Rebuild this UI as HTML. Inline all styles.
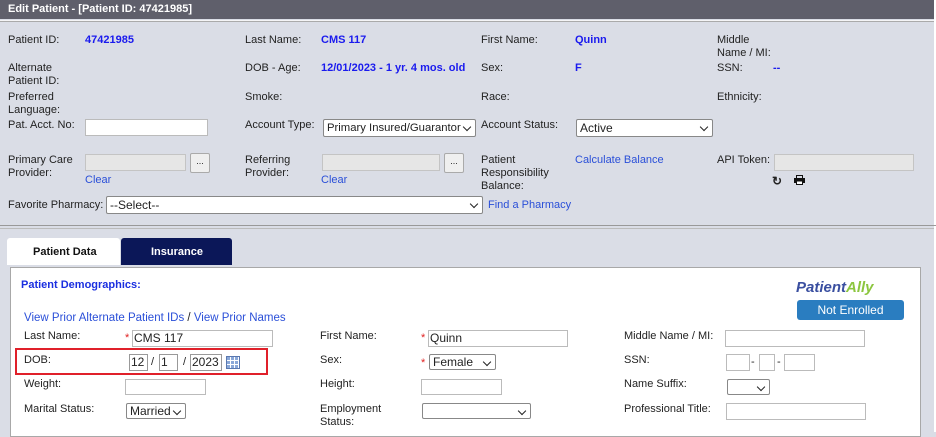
<!DOCTYPE html>
<html><head><meta charset="utf-8"><style>
*{margin:0;padding:0;box-sizing:border-box}
body{width:936px;height:432px;overflow:hidden;background:#dadde6;font-family:"Liberation Sans",Arial,sans-serif;font-size:11px;color:#222;position:relative}
.a{position:absolute;white-space:nowrap;line-height:13px;margin-top:1px}
.v{color:#1a1aee;font-weight:bold}
.l{color:#2a4fd8}
.in{position:absolute;background:#fff;border:1px solid #bbb}
.dis{position:absolute;background:#e6e6e6;border:1px solid #c4c4c4}
.sel{position:absolute;background:#fff;border:1px solid #888;border-radius:2px;font-size:12px;line-height:16px;padding-left:3px;white-space:nowrap;overflow:hidden}
.sel:after{content:"";position:absolute;right:5px;top:4px;width:5px;height:5px;border-right:1.5px solid #222;border-bottom:1.5px solid #222;transform:rotate(45deg)}
.btn{position:absolute;background:#efefef;border:1px solid #aaa;border-radius:2px;text-align:center;font-size:9px;line-height:14px}
.r{color:#e02020}
</style></head><body>
<div style="position:absolute;left:0;top:0;width:936px;height:19px;background:#5f5f6b"></div>
<div class="a" style="left:8px;top:2px;color:#fff;font-weight:bold">Edit Patient - [Patient ID: 47421985]</div>
<div style="position:absolute;left:0;top:20px;width:936px;height:2px;background:#f4f4f6;border-bottom:1px solid #aaa"></div>
<div style="position:absolute;right:0;top:0;width:2px;height:432px;background:#fff"></div>

<div class="a" style="left:8px;top:33px">Patient ID:</div><div class="a v" style="left:85px;top:33px">47421985</div>
<div class="a" style="left:245px;top:33px">Last Name:</div><div class="a v" style="left:321px;top:33px">CMS 117</div>
<div class="a" style="left:481px;top:33px">First Name:</div><div class="a v" style="left:575px;top:33px">Quinn</div>
<div class="a" style="left:717px;top:33px">Middle<br>Name / MI:</div>

<div class="a" style="left:8px;top:61px">Alternate<br>Patient ID:</div>
<div class="a" style="left:245px;top:61px">DOB - Age:</div><div class="a v" style="left:321px;top:61px">12/01/2023 - 1 yr. 4 mos. old</div>
<div class="a" style="left:481px;top:61px">Sex:</div><div class="a v" style="left:575px;top:61px">F</div>
<div class="a" style="left:717px;top:61px">SSN:</div><div class="a v" style="left:773px;top:61px">--</div>

<div class="a" style="left:8px;top:90px">Preferred<br>Language:</div>
<div class="a" style="left:245px;top:90px">Smoke:</div>
<div class="a" style="left:481px;top:90px">Race:</div>
<div class="a" style="left:717px;top:90px">Ethnicity:</div>

<div class="a" style="left:8px;top:118px">Pat. Acct. No:</div>
<div class="in" style="left:85px;top:119px;width:123px;height:17px"></div>
<div class="a" style="left:245px;top:118px">Account Type:</div>
<div class="sel" style="left:323px;top:119px;width:153px;height:18px;font-size:11.3px">Primary Insured/Guarantor</div>
<div class="a" style="left:481px;top:118px">Account Status:</div>
<div class="sel" style="left:576px;top:119px;width:137px;height:18px">Active</div>

<div class="a" style="left:8px;top:153px">Primary Care<br>Provider:</div>
<div class="dis" style="left:85px;top:154px;width:101px;height:17px"></div>
<div class="btn" style="left:190px;top:153px;width:20px;height:20px">...</div>
<div class="a l" style="left:85px;top:173px">Clear</div>
<div class="a" style="left:245px;top:153px">Referring<br>Provider:</div>
<div class="dis" style="left:322px;top:154px;width:118px;height:17px"></div>
<div class="btn" style="left:444px;top:153px;width:20px;height:20px">...</div>
<div class="a l" style="left:321px;top:173px">Clear</div>
<div class="a" style="left:481px;top:153px">Patient<br>Responsibility<br>Balance:</div>
<div class="a l" style="left:575px;top:153px">Calculate Balance</div>
<div class="a" style="left:717px;top:153px">API Token:</div>
<div class="dis" style="left:774px;top:154px;width:140px;height:17px"></div>
<div class="a" style="left:772px;top:174px;font-weight:bold;font-size:12px">&#8635;</div>
<svg style="position:absolute;left:794px;top:175px" width="11" height="10" viewBox="0 0 11 10"><rect x="2.5" y="0.5" width="6" height="3" fill="none" stroke="#111"/><rect x="0" y="3" width="11" height="5" fill="#111"/><rect x="2.5" y="6" width="6" height="3.5" fill="#fff" stroke="#111"/></svg>

<div class="a" style="left:8px;top:198px">Favorite Pharmacy:</div>
<div class="sel" style="left:106px;top:196px;width:377px;height:18px">--Select--</div>
<div class="a l" style="left:488px;top:198px">Find a Pharmacy</div>

<div style="position:absolute;left:0;top:225px;width:936px;height:1px;background:#999"></div>
<div style="position:absolute;left:0;top:228px;width:934px;height:1px;background:#bbb"></div>

<div style="position:absolute;left:7px;top:238px;width:113px;height:27px;background:#fff;border-radius:3px 3px 0 0"></div>
<div class="a" style="left:33px;top:245px;font-weight:bold;color:#111">Patient Data</div>
<div style="position:absolute;left:121px;top:238px;width:111px;height:27px;background:#0b1758;border-radius:3px 3px 0 0"></div>
<div class="a" style="left:151px;top:245px;font-weight:bold;color:#fff">Insurance</div>

<div style="position:absolute;left:10px;top:267px;width:911px;height:170px;background:#fff;border:1px solid #a8a8a8"></div>
<div class="a" style="left:21px;top:278px;font-weight:bold;color:#1a2fe0">Patient Demographics:</div>
<div class="a" style="left:796px;top:278px;font-weight:bold;font-style:italic;font-size:15px;line-height:18px;color:#3a4fa0">Patient<span style="color:#8cc63f">Ally</span></div>
<div style="position:absolute;left:797px;top:300px;width:107px;height:20px;background:#2a7dc0;border-radius:3px;color:#fff;font-size:12px;line-height:20px;text-align:center">Not Enrolled</div>

<div class="a l" style="left:24px;top:311px;font-size:11.5px">View Prior Alternate Patient IDs <span style="color:#222">/</span> View Prior Names</div>

<div class="a" style="left:24px;top:329px">Last Name:</div><div class="a r" style="left:125px;top:331px">*</div>
<div class="in" style="left:132px;top:330px;width:141px;height:17px;font-size:12px;line-height:15px;padding-left:1px">CMS 117</div>
<div class="a" style="left:320px;top:329px">First Name:</div><div class="a r" style="left:421px;top:331px">*</div>
<div class="in" style="left:428px;top:330px;width:140px;height:17px;font-size:12px;line-height:15px;padding-left:1px">Quinn</div>
<div class="a" style="left:624px;top:329px">Middle Name / MI:</div>
<div class="in" style="left:725px;top:330px;width:140px;height:17px"></div>

<div style="position:absolute;left:15px;top:348px;width:253px;height:27px;border:2px solid #e0202a"></div>
<div class="a" style="left:24px;top:353px">DOB:</div>
<div class="in" style="left:129px;top:354px;width:19px;height:17px;font-size:12px;line-height:15px;padding-left:1px;border-color:#999">12</div>
<div class="a" style="left:151px;top:355px">/</div>
<div class="in" style="left:159px;top:354px;width:19px;height:17px;font-size:12px;line-height:15px;padding-left:1px;border-color:#999">1</div>
<div class="a" style="left:183px;top:355px">/</div>
<div class="in" style="left:190px;top:354px;width:32px;height:17px;font-size:12px;line-height:15px;padding-left:1px;border-color:#999">2023</div>
<div style="position:absolute;left:226px;top:356px;width:14px;height:13px;background:#8aa8d8;border:1px solid #5a78b0;background-image:repeating-linear-gradient(90deg,transparent 0 3px,#fff 3px 4px),repeating-linear-gradient(0deg,transparent 0 3px,#fff 3px 4px)"></div>
<div class="a" style="left:320px;top:353px">Sex:</div><div class="a r" style="left:421px;top:356px">*</div>
<div class="sel" style="left:429px;top:354px;width:67px;height:16px;line-height:14px">Female</div>
<div class="a" style="left:624px;top:353px">SSN:</div>
<div class="in" style="left:726px;top:354px;width:24px;height:17px"></div>
<div class="a" style="left:751px;top:355px">-</div>
<div class="in" style="left:759px;top:354px;width:16px;height:17px"></div>
<div class="a" style="left:777px;top:355px">-</div>
<div class="in" style="left:784px;top:354px;width:31px;height:17px"></div>

<div class="a" style="left:24px;top:377px">Weight:</div>
<div class="in" style="left:125px;top:379px;width:81px;height:16px"></div>
<div class="a" style="left:320px;top:377px">Height:</div>
<div class="in" style="left:421px;top:379px;width:81px;height:16px"></div>
<div class="a" style="left:624px;top:377px">Name Suffix:</div>
<div class="sel" style="left:727px;top:379px;width:43px;height:16px"></div>

<div class="a" style="left:24px;top:402px">Marital Status:</div>
<div class="sel" style="left:126px;top:403px;width:60px;height:16px;line-height:14px">Married</div>
<div class="a" style="left:320px;top:402px">Employment<br>Status:</div>
<div class="sel" style="left:422px;top:403px;width:109px;height:16px"></div>
<div class="a" style="left:624px;top:402px">Professional Title:</div>
<div class="in" style="left:726px;top:403px;width:140px;height:17px"></div>
</body></html>
